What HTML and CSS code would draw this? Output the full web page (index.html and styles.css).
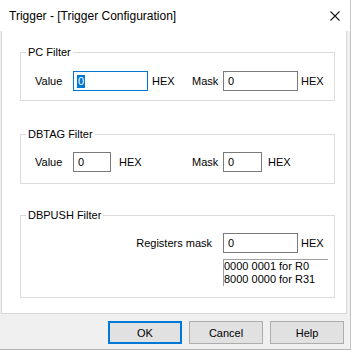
FILE: index.html
```html
<!DOCTYPE html>
<html>
<head>
    <title>Trigger - [Trigger Configuration]</title>
    <meta charset="utf-8">
    <link rel="stylesheet" href="styles.css">
</head>
<body>
<div class="window">
    <div class="titlebar">
        <span class="title">Trigger - [Trigger Configuration]</span>
        <svg class="close" width="10" height="10" viewBox="0 0 10 10">
            <path d="M0.5 0.5 L9.5 9.5 M9.5 0.5 L0.5 9.5" stroke="#1a1a1a" stroke-width="1.1" fill="none"/>
        </svg>
    </div>
    <div class="client">
        <div class="page">
            <fieldset class="group group-pc">
                <legend>PC Filter</legend>
                <div class="row">
                    <span class="label">Value</span>
                    <div class="edit edit-wide focused"><span class="sel">0</span></div>
                    <span class="hex hex-pc">HEX</span>
                    <span class="label label-mask">Mask</span>
                    <div class="edit edit-wide">0</div>
                    <span class="hex hex-pc2">HEX</span>
                </div>
            </fieldset>

            <fieldset class="group group-tag">
                <legend>DBTAG Filter</legend>
                <div class="row">
                    <span class="label">Value</span>
                    <div class="edit edit-short">0</div>
                    <span class="hex hex-tag">HEX</span>
                    <span class="label label-mask">Mask</span>
                    <div class="edit edit-short2">0</div>
                    <span class="hex hex-tag2">HEX</span>
                </div>
            </fieldset>

            <fieldset class="group group-push">
                <legend>DBPUSH Filter</legend>
                <div class="row row-push">
                    <span class="label label-regs">Registers mask</span>
                    <div class="edit edit-wide">0</div>
                    <span class="hex hex-pc2">HEX</span>
                </div>
                <div class="hint">
                    0000 0001 for R0<br>
                    8000 0000 for R31
                </div>
            </fieldset>
        </div>
        <div class="buttons">
            <button class="btn btn-default">OK</button>
            <button class="btn">Cancel</button>
            <button class="btn">Help</button>
        </div>
    </div>
</div>
</body>
</html>
```

FILE: styles.css
```css
* {
    box-sizing: border-box;
}

body {
    margin: 0;
    background-color: #fff;
    font-family: "Liberation Sans", Arial, sans-serif;
    font-size: 11px;
    color: #000;
}

.window {
    width: 351px;
    height: 350px;
    border-right: 1px solid #c4c4c4;
    border-bottom: 1px solid #b4b4b4;
    display: flex;
    flex-direction: column;
}

.titlebar {
    height: 31px;
    flex: none;
    background-color: #fff;
    display: flex;
    align-items: center;
    padding: 0 10px 0 9px;
}

.title {
    flex: 1;
    font-size: 12px;
    margin-top: 1px;
}

.close {
    display: block;
    margin-top: 1px;
}

.client {
    flex: 1;
    background-color: #f0f0f0;
    display: flex;
    flex-direction: column;
}

.page {
    margin-left: 1px;
    width: 346px;
    height: 283px;
    background-color: #fff;
    border: 1px solid #d9d9d9;
    border-top: none;
    padding-top: 15px;
}

.group {
    margin: 0 0 0 18px;
    padding: 0;
    width: 315px;
    min-width: 0;
    border: 1px solid #dcdcdc;
}

.group legend {
    margin-left: 5px;
    padding: 0 2px;
    line-height: 13px;
}

.group-pc {
    padding-top: 12px;
    padding-bottom: 9px;
}

.group-tag {
    margin-top: 27px;
    padding-top: 11px;
    padding-bottom: 11px;
}

.group-push {
    margin-top: 25px;
    padding-top: 11px;
    padding-bottom: 11px;
}

.row {
    display: flex;
    align-items: center;
    padding-left: 14px;
}

.row-push {
    padding-left: 0;
}

.label {
    width: 38px;
    flex: none;
}

.label-mask {
    width: 31px;
}

.label-regs {
    width: 202px;
    text-align: right;
    padding-right: 11px;
}

.edit {
    flex: none;
    height: 20px;
    border: 1px solid #7a7a7a;
    background-color: #fff;
    padding-left: 4px;
    line-height: 18px;
}

.edit.focused {
    border-color: #0078d7;
}

.sel {
    display: inline-block;
    background-color: #0078d7;
    color: #fff;
    line-height: 13px;
    padding: 0 1px;
    margin-left: -1px;
}

.edit-wide {
    width: 75px;
}

.edit-short {
    width: 38px;
}

.edit-short2 {
    width: 39px;
}

.hex {
    flex: none;
}

.hex-pc {
    margin-left: 4px;
    width: 40px;
}

.hex-pc2 {
    margin-left: 3px;
}

.hex-tag {
    margin-left: 8px;
    width: 73px;
}

.hex-tag2 {
    margin-left: 6px;
}

.hint {
    margin: 6px 0 0 202px;
    width: 105px;
    height: 27px;
    border-top: 1px solid #a0a0a0;
    border-left: 1px solid #a0a0a0;
    line-height: 13px;
    padding-top: 0;
}

.buttons {
    display: flex;
    justify-content: flex-end;
    gap: 7px;
    padding: 7px 6px 0 0;
}

.btn {
    width: 74px;
    height: 23px;
    background-color: #e1e1e1;
    border: 1px solid #adadad;
    font-family: "Liberation Sans", Arial, sans-serif;
    font-size: 11px;
    color: #000;
    padding: 0;
}

.btn-default {
    border: 2px solid #0078d7;
}
```
